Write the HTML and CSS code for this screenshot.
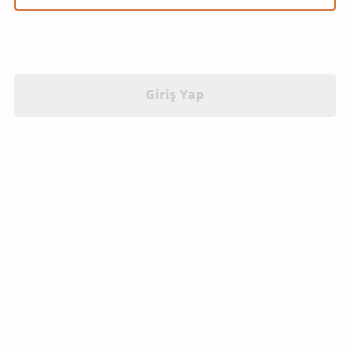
FILE: index.html
```html
<!DOCTYPE html>
<html lang="tr">
<head>
<meta charset="utf-8">
<link rel="stylesheet" href="styles.css">
</head>
<body>
<div class="form">
  <div class="field"></div>
  <button class="submit" disabled>Giriş Yap</button>
</div>
</body>
</html>
```
FILE: styles.css
```css
html, body {
  margin: 0;
  padding: 0;
  background: #fdfdfd;
  height: 100%;
}
.form {
  display: flex;
  flex-direction: column;
  padding: 0 14px;
  gap: 63px;
}
.field {
  margin-top: -40px;
  height: 51px;
  box-sizing: border-box;
  border: 2px solid #d97b45;
  border-radius: 4px;
  background: #fffefd;
}
.submit {
  height: 43px;
  border: none;
  border-radius: 4px;
  background: #eeeeee;
  color: #c9c9c9;
  font-family: "Open Sans", sans-serif;
  font-weight: 700;
  font-size: 12px;
  letter-spacing: 0.6px;
  padding: 0 0 3px;
}
```
